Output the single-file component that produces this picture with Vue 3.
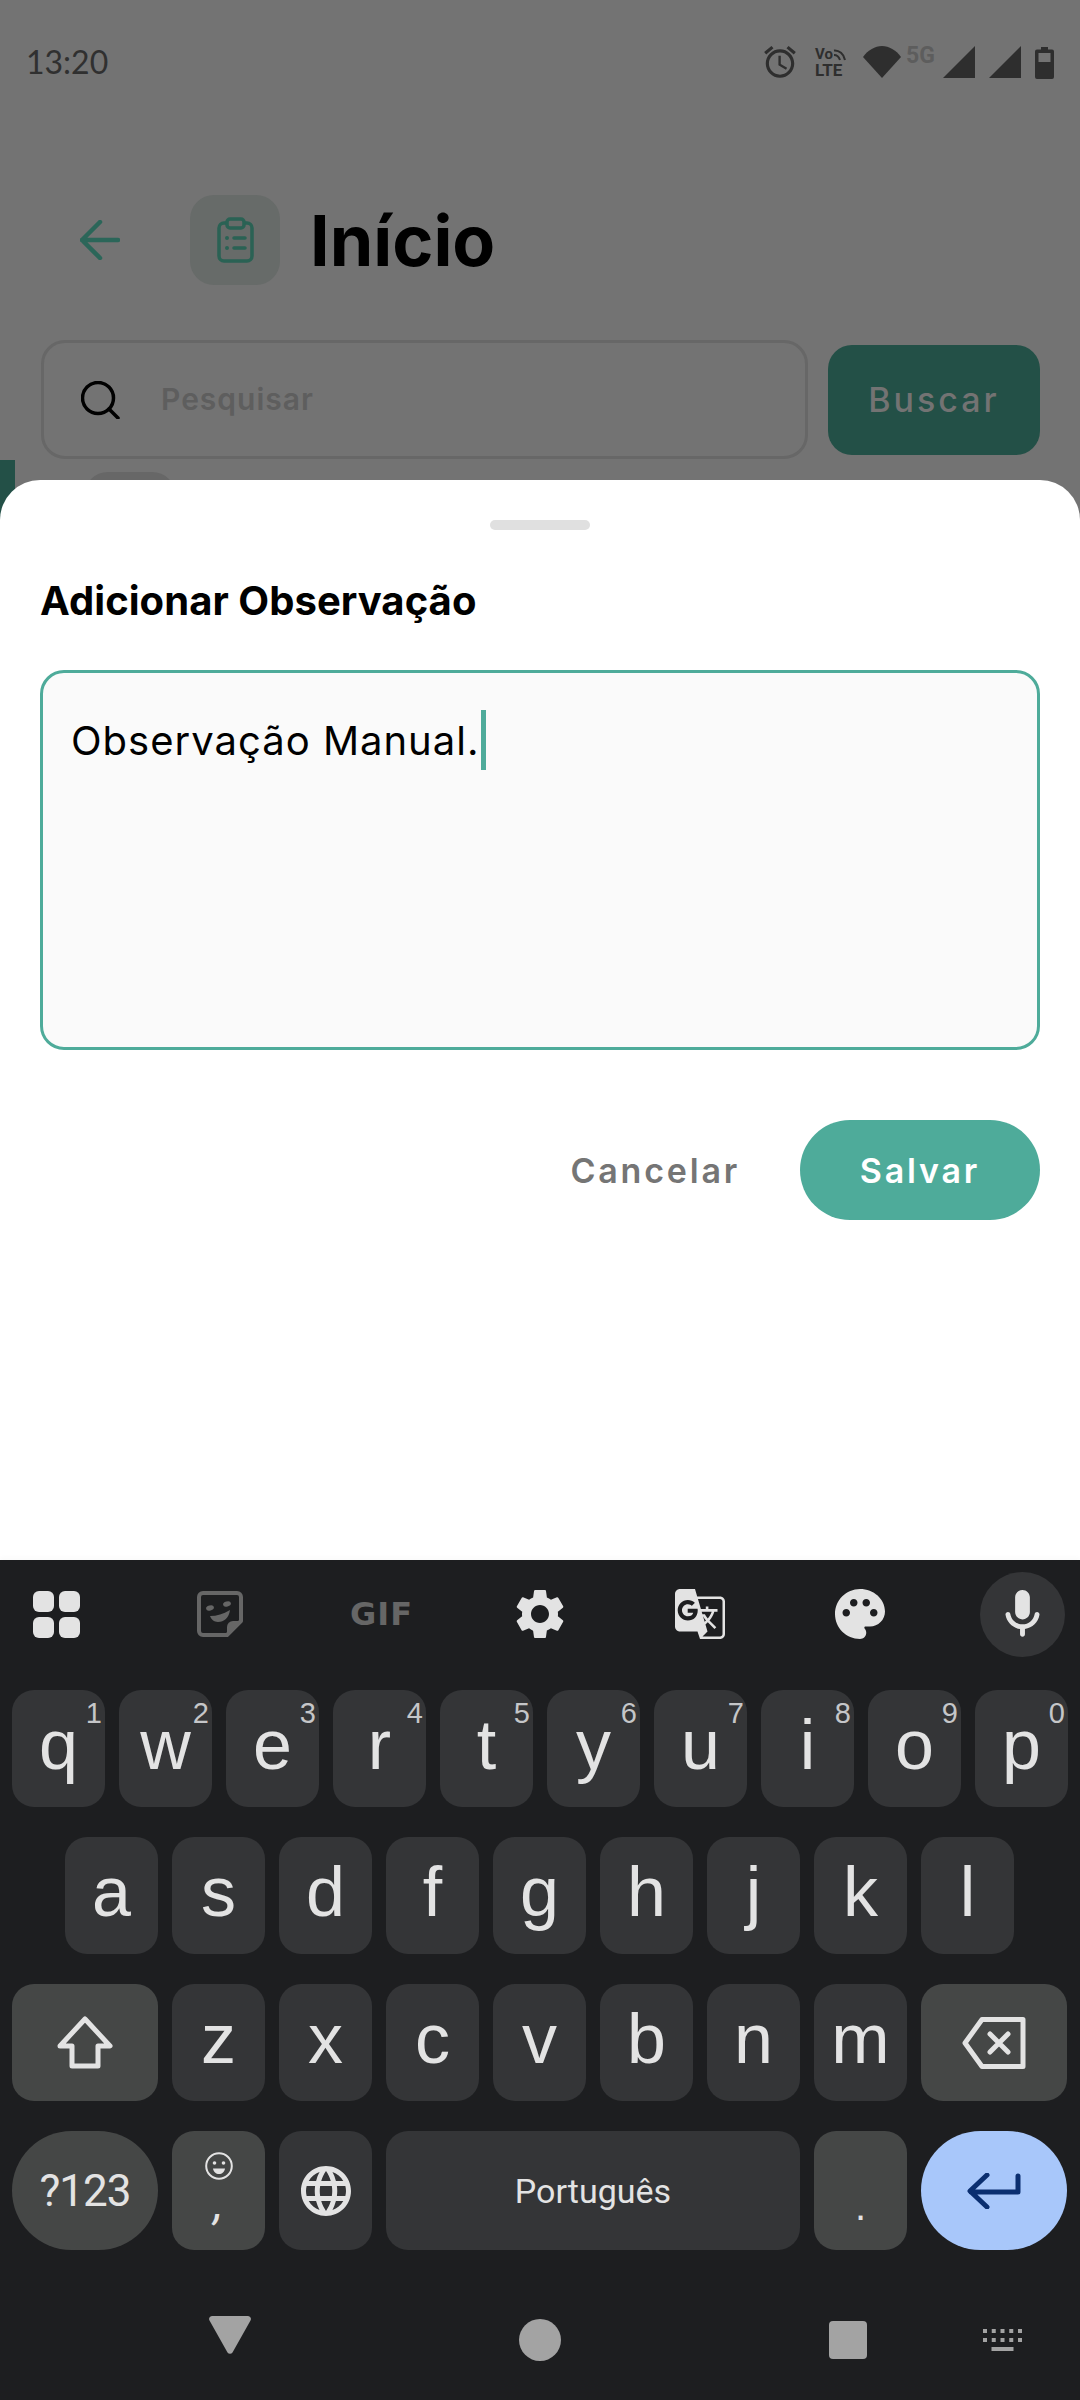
<template>
  <div class="screen">
    <div class="behind">
      <div class="status">
        <span class="time">13:20</span>
        <div class="status-icons">
          <svg class="ic-alarm" width="38" height="38" viewBox="0 0 24 24"><path fill="#2e2e2e" d="M22 5.72l-4.6-3.86-1.29 1.53 4.6 3.86L22 5.72zM7.88 3.39L6.6 1.86 2 5.71l1.29 1.53 4.59-3.85zM12.5 8H11v6l4.75 2.85.75-1.23-4-2.37V8zM12 4c-4.97 0-9 4.03-9 9s4.03 9 9 9 9-4.03 9-9-4.03-9-9-9zm0 16c-3.87 0-7-3.13-7-7s3.13-7 7-7 7 3.13 7 7-3.13 7-7 7z"/></svg>
          <div class="volte">
            <div class="vo">Vo<svg width="14" height="14" viewBox="0 0 14 14"><path d="M1 3.5C6 3 11 7 12 13M1 8c3 0 5 2 6 5" fill="none" stroke="#2e2e2e" stroke-width="2"/></svg></div>
            <div class="lte">LTE</div>
          </div>
          <svg class="ic-wifi" width="38" height="32" viewBox="0 0 38 32"><path fill="#2e2e2e" d="M0 11C5 4 12 0 19 0s14 4 19 11L19 32z"/></svg>
          <span class="five-g">5G</span>
          <svg class="ic-sig1" width="32" height="32" viewBox="0 0 32 32"><path fill="#2e2e2e" d="M32 0v32H0z"/></svg>
          <svg class="ic-sig2" width="32" height="32" viewBox="0 0 32 32"><path fill="#2e2e2e" d="M32 0v32H0z"/></svg>
          <svg class="ic-batt" width="19" height="32" viewBox="0 0 19 32"><path fill="#2e2e2e" d="M6 0h7v2.5h4a2 2 0 0 1 2 2V30a2 2 0 0 1-2 2H2a2 2 0 0 1-2-2V4.500a2 2 0 0 1 2-2h4z"/><rect x="3.500" y="6" width="12" height="9" fill="#737373"/></svg>
        </div>
      </div>

      <div class="header">
        <svg class="back" width="40" height="40" viewBox="0 0 40 40"><path d="M38 20H2M20 2L2 20l18 18" fill="none" stroke="#2b6659" stroke-width="4.500" stroke-linecap="round" stroke-linejoin="round"/></svg>
        <div class="head-icon">
          <svg width="37" height="46" viewBox="0 0 37 46">
            <rect x="2" y="6" width="33" height="38" rx="5" fill="none" stroke="#2a6254" stroke-width="3.500"/>
            <rect x="10" y="2" width="17" height="9" rx="3" fill="#676b69" stroke="#2a6254" stroke-width="3.500"/>
            <circle cx="10" cy="21" r="2" fill="#2a6254"/>
            <circle cx="10" cy="31" r="2" fill="#2a6254"/>
            <path d="M17 21h11M17 31h11" stroke="#2a6254" stroke-width="3.500" stroke-linecap="round"/>
          </svg>
        </div>
        <h1 class="page-title">Início</h1>
      </div>

      <div class="search-row">
        <div class="search-box">
          <svg width="39" height="38" viewBox="0 0 39 38"><circle cx="17" cy="17" r="15.500" fill="none" stroke="#000" stroke-width="3.500"/><path d="M28 28l9 9" stroke="#000" stroke-width="3.500" stroke-linecap="round"/></svg>
          <span class="placeholder">Pesquisar</span>
        </div>
        <div class="search-btn">Buscar</div>
      </div>

      <div class="peek">
        <div class="peek-bar"></div>
        <div class="peek-chip"></div>
      </div>
    </div>

    <div class="sheet">
      <div class="handle"></div>
      <h2 class="sheet-title">Adicionar Observação</h2>
      <div class="note">Observação Manual.<span class="caret"></span></div>
      <div class="actions">
        <span class="cancel">Cancelar</span>
        <span class="save">Salvar</span>
      </div>
    </div>

    <div class="keyboard">
      <div class="toolbar">
        <svg class="tb-grid" width="47" height="47" viewBox="0 0 47 47"><g fill="#e3e3e3"><rect width="21" height="21" rx="6"/><rect x="26" width="21" height="21" rx="6"/><rect y="26" width="21" height="21" rx="6"/><rect x="26" y="26" width="21" height="21" rx="6"/></g></svg>
        <svg class="tb-sticker" width="46" height="46" viewBox="0 0 46 46">
          <path d="M6 2h34a4 4 0 0 1 4 4v24L30 44H6a4 4 0 0 1-4-4V6a4 4 0 0 1 4-4z" fill="none" stroke="#666" stroke-width="4" stroke-linejoin="round"/>
          <path d="M44 30h-8a6 6 0 0 0-6 6v8z" fill="#666"/>
          <ellipse cx="13" cy="17" rx="4" ry="2.500" fill="#666" transform="rotate(-15 13 17)"/>
          <ellipse cx="30" cy="13" rx="4" ry="2.500" fill="#666" transform="rotate(-15 30 13)"/>
          <path d="M13 25c7 0 13-2 20-6-1 8-6 12-12 12-4 0-7-3-8-6z" fill="#666"/>
        </svg>
        <span class="tb-gif">GIF</span>
        <svg class="tb-gear" width="50" height="50" viewBox="2.500 2 19 20"><path fill="#e3e3e3" d="M19.140 12.940c.04-.3.06-.61.06-.94 0-.32-.02-.64-.07-.94l2.030-1.580c.18-.14.23-.41.12-.61l-1.920-3.320c-.12-.22-.37-.29-.59-.22l-2.390.96c-.5-.38-1.030-.7-1.620-.94l-.36-2.540c-.04-.24-.24-.41-.48-.41h-3.840c-.24 0-.43.17-.47.41l-.36 2.540c-.59.24-1.130.57-1.620.94l-2.390-.96c-.22-.08-.47 0-.59.22L2.740 8.870c-.12.21-.08.47.12.61l2.030 1.580c-.05.3-.09.63-.09.94s.02.64.07.94l-2.030 1.580c-.18.14-.23.41-.12.61l1.920 3.320c.12.22.37.29.59.22l2.390-.96c.5.38 1.030.7 1.620.94l.36 2.540c.05.24.24.41.48.41h3.840c.24 0 .44-.17.47-.41l.36-2.540c.59-.24 1.130-.56 1.620-.94l2.390.96c.22.08.47 0 .59-.22l1.920-3.320c.12-.22.07-.47-.12-.61l-2.010-1.580zM12 15.600c-1.980 0-3.600-1.620-3.600-3.600s1.620-3.600 3.600-3.600 3.600 1.620 3.600 3.600-1.620 3.600-3.600 3.600z"/></svg>
        <svg class="tb-translate" width="50" height="50" viewBox="2 2 20 20"><path fill="#e3e3e3" d="M20 5h-9.120L10 2H4c-1.100 0-2 .9-2 2v13c0 1.100.9 2 2 2h7l1 3h8c1.100 0 2-.9 2-2V7c0-1.100-.9-2-2-2zM7.170 14.590c-2.250 0-4.090-1.830-4.090-4.090s1.830-4.090 4.090-4.090c1.040 0 1.990.37 2.740 1.070l.07.06-1.230 1.180-.06-.05c-.29-.27-.78-.59-1.520-.59-1.310 0-2.380 1.090-2.380 2.420s1.070 2.420 2.380 2.420c1.370 0 1.960-.87 2.120-1.460H7.080V9.910h3.950l.01.07c.04.21.05.4.05.61 0 2.350-1.610 4-3.920 4zm6.030-1.710c.33.6.74 1.180 1.190 1.700l-.54.53-.65-2.230zm.77-.76h-.99l-.31-1.040h3.990s-.34 1.310-1.560 2.740c-.52-.62-.89-1.230-1.130-1.700zM21 20c0 .55-.45 1-1 1h-7l2-2-.81-2.770.92-.92L17.790 18l.73-.73-2.710-2.680c.9-1.030 1.600-2.250 1.920-3.510H19v-1.040h-3.640V9h-1.040v1.040h-1.960L11.180 6H20c.55 0 1 .45 1 1v13z"/></svg>
        <svg class="tb-palette" width="50" height="50" viewBox="2 2 20 20"><path fill="#e3e3e3" d="M12 2C6.490 2 2 6.490 2 12s4.490 10 10 10c1.380 0 2.500-1.120 2.500-2.500 0-.61-.23-1.200-.64-1.670-.08-.1-.13-.21-.13-.33 0-.28.22-.5.5-.5H16c3.310 0 6-2.690 6-6 0-4.960-4.490-9-10-9zm5.500 11c-.83 0-1.500-.67-1.500-1.500s.67-1.500 1.500-1.500 1.500.67 1.500 1.500-.67 1.500-1.500 1.500zm-3-4c-.83 0-1.500-.67-1.500-1.500S13.670 6 14.500 6s1.500.67 1.500 1.500S15.330 9 14.500 9zM5 11.500c0-.83.67-1.500 1.500-1.500s1.500.67 1.500 1.500S7.330 13 6.500 13 5 12.330 5 11.500zm6-4c0 .83-.67 1.500-1.500 1.500S8 8.330 8 7.500 8.670 6 9.500 6s1.500.67 1.500 1.500z"/></svg>
        <div class="tb-mic">
          <svg width="59" height="59" viewBox="0 0 24 24"><path fill="#e3e3e3" d="M12 14c1.660 0 3-1.340 3-3V5c0-1.660-1.340-3-3-3S9 3.340 9 5v6c0 1.660 1.340 3 3 3zm5.910-3c-.49 0-.9.36-.98.85C16.520 14.200 14.470 16 12 16s-4.520-1.800-4.930-4.150c-.08-.49-.49-.85-.98-.85-.61 0-1.090.54-1 1.140.49 3 2.890 5.350 5.910 5.780V20c0 .55.45 1 1 1s1-.45 1-1v-2.080c3.020-.43 5.420-2.780 5.910-5.780.1-.6-.39-1.140-1-1.140z"/></svg>
        </div>
      </div>

      <div class="row">
        <div v-for="k in topRow" :key="k.l" class="key">{{ k.l }}<span class="sup">{{ k.n }}</span></div>
      </div>
      <div class="row row-mid">
        <div v-for="l in midRow" :key="l" class="key">{{ l }}</div>
      </div>
      <div class="row">
        <div class="key fn wide">
          <svg width="56" height="53" viewBox="0 0 56 53"><path d="M28 3l25 27H41v20H15V30H3z" fill="none" stroke="#e3e3e3" stroke-width="5" stroke-linejoin="round"/></svg>
        </div>
        <div v-for="l in lowRow" :key="l" class="key">{{ l }}</div>
        <div class="key fn wide">
          <svg width="64" height="52" viewBox="0 0 64 52"><path d="M20 2.500h41V49.500H20L3 26z" fill="none" stroke="#e3e3e3" stroke-width="5" stroke-linejoin="round"/><path d="M28 17l18 18M46 17L28 35" stroke="#e3e3e3" stroke-width="5" stroke-linecap="round"/></svg>
        </div>
      </div>
      <div class="row row-last">
        <div class="key fn wide pill sym">?123</div>
        <div class="key fn comma">
          <svg width="28" height="28" viewBox="0 0 28 28"><circle cx="14" cy="14" r="12.800" fill="none" stroke="#e3e3e3" stroke-width="2"/><circle cx="9.500" cy="11" r="1.800" fill="#e3e3e3"/><circle cx="18.500" cy="11" r="1.800" fill="#e3e3e3"/><path d="M8 16.500h12c-.5 3.500-3 5.500-6 5.500s-5.500-2-6-5.500z" fill="#e3e3e3"/></svg>
          <span class="comma-mark">,</span>
        </div>
        <div class="key">
          <svg width="60" height="60" viewBox="0 0 24 24"><path fill="#e3e3e3" d="M11.990 2C6.470 2 2 6.480 2 12s4.470 10 9.990 10C17.520 22 22 17.520 22 12S17.520 2 11.990 2zm6.930 6h-2.950c-.32-1.250-.78-2.450-1.380-3.560 1.840.63 3.370 1.910 4.330 3.560zM12 4.040c.83 1.200 1.480 2.530 1.910 3.960h-3.820c.43-1.430 1.080-2.760 1.910-3.960zM4.260 14C4.100 13.360 4 12.690 4 12s.1-1.360.26-2h3.380c-.08.66-.14 1.320-.14 2 0 .68.06 1.340.14 2H4.260zm.82 2h2.950c.32 1.250.78 2.450 1.380 3.560-1.840-.63-3.370-1.900-4.330-3.560zm2.950-8H5.080c.96-1.660 2.490-2.930 4.330-3.560C8.810 5.550 8.350 6.750 8.030 8zM12 19.960c-.83-1.200-1.480-2.530-1.910-3.960h3.820c-.43 1.430-1.080 2.760-1.910 3.960zM14.340 14H9.660c-.09-.66-.16-1.320-.16-2 0-.68.07-1.350.16-2h4.680c.09.65.16 1.320.16 2 0 .68-.07 1.340-.16 2zm.25 5.560c.6-1.110 1.060-2.310 1.380-3.560h2.950c-.96 1.650-2.490 2.930-4.330 3.560zM16.360 14c.08-.66.14-1.320.14-2 0-.68-.06-1.340-.14-2h3.380c.16.64.26 1.310.26 2s-.1 1.360-.26 2h-3.380z"/></svg>
        </div>
        <div class="key space">Português</div>
        <div class="key fn period">.</div>
        <div class="key wide pill enter">
          <svg width="54" height="36" viewBox="0 0 54 36"><path d="M51 3v16H4M20 2L3 18l17 16" fill="none" stroke="#0b2f70" stroke-width="5" stroke-linecap="round" stroke-linejoin="round"/></svg>
        </div>
      </div>

      <div class="nav">
        <svg class="nav-back" width="42" height="38" viewBox="0 0 42 38"><path d="M3 0h36a3 3 0 0 1 2.500 4.500L23.500 36.500a3 3 0 0 1-5 0L.5 4.500A3 3 0 0 1 3 0z" fill="#a3a3a3"/></svg>
        <div class="nav-home"></div>
        <div class="nav-recent"></div>
        <svg class="nav-kb" width="39" height="22" viewBox="0 0 39 22"><g fill="#a3a3a3"><rect v-for="d in kbDots" :key="d.x + '-' + d.y" :x="d.x" :y="d.y" width="4" height="4"/><rect x="8.500" y="18" width="22" height="4"/></g></svg>
      </div>
    </div>
  </div>
</template>

<script setup>
const topRow = [
  { l: 'q', n: '1' }, { l: 'w', n: '2' }, { l: 'e', n: '3' }, { l: 'r', n: '4' }, { l: 't', n: '5' },
  { l: 'y', n: '6' }, { l: 'u', n: '7' }, { l: 'i', n: '8' }, { l: 'o', n: '9' }, { l: 'p', n: '0' },
]
const midRow = ['a', 's', 'd', 'f', 'g', 'h', 'j', 'k', 'l']
const lowRow = ['z', 'x', 'c', 'v', 'b', 'n', 'm']

const kbDots = []
for (const y of [0, 9]) {
  for (let i = 0; i < 5; i++) kbDots.push({ x: i * 8.75, y })
}
</script>

<style>
html, body {
  margin: 0;
  background: #737373;
}
</style>

<style scoped>
.screen {
  width: 1080px;
  height: 2400px;
  display: flex;
  flex-direction: column;
  background: #737373;
  overflow: hidden;
  font-family: Inter, "Liberation Sans", sans-serif;
}

.behind {
  height: 520px;
  margin-bottom: -40px;
  flex: none;
  overflow: hidden;
}

.status {
  height: 124px;
  display: flex;
  align-items: flex-start;
  justify-content: space-between;
  box-sizing: border-box;
  padding: 44px 26px 0 26px;
}

.time {
  font-family: Lato, sans-serif;
  font-size: 32px;
  line-height: 36px;
  color: #303030;
}

.status-icons {
  display: flex;
  align-items: flex-start;
}

.ic-alarm { margin-top: -1px; margin-right: 1px; }
.volte { margin-left: 15px; width: 38px; color: #2e2e2e; font-family: Roboto, sans-serif; font-weight: 700; }
.vo { display: flex; align-items: flex-start; font-size: 15px; line-height: 15px; height: 15px; margin-top: 3px; }
.lte { font-size: 17px; line-height: 16px; }
.ic-wifi { margin-left: 10px; margin-top: 2px; }
.five-g { margin-left: 5px; width: 31px; font-family: Roboto, sans-serif; font-weight: 700; font-size: 23px; line-height: 20px; color: #5d5d5d; margin-top: 2px; }
.ic-sig1 { margin-left: 6px; margin-top: 2px; }
.ic-sig2 { margin-left: 14px; margin-top: 2px; }
.ic-batt { margin-left: 14px; margin-top: 3px; }

.header {
  height: 90px;
  margin-top: 71px;
  display: flex;
  align-items: center;
  padding-left: 80px;
}

.head-icon {
  width: 90px;
  height: 90px;
  margin-left: 70px;
  border-radius: 24px;
  background: #676b69;
  display: flex;
  align-items: center;
  justify-content: center;
}

.page-title {
  margin: 0 0 0 30px;
  font-size: 70px;
  font-weight: 700;
  color: #000;
}

.search-row {
  margin-top: 55px;
  padding: 0 40px 0 41px;
  display: flex;
  align-items: center;
  justify-content: space-between;
}

.search-box {
  width: 767px;
  height: 119px;
  box-sizing: border-box;
  border: 3px solid #676767;
  border-radius: 24px;
  display: flex;
  align-items: center;
  padding-left: 37px;
}

.placeholder {
  margin: -2px 0 0 41px;
  font-size: 30px;
  font-weight: 600;
  letter-spacing: 1px;
  color: #5e5e5e;
}

.search-btn {
  width: 212px;
  height: 110px;
  border-radius: 24px;
  background: #235047;
  color: #737373;
  font-size: 34px;
  font-weight: 500;
  letter-spacing: 3px;
  display: flex;
  align-items: center;
  justify-content: center;
}

.peek {
  position: relative;
  height: 60px;
}

.peek-bar {
  position: absolute;
  left: 0;
  top: 1px;
  width: 15px;
  height: 60px;
  background: #235047;
}

.peek-chip {
  position: absolute;
  left: 84px;
  top: 13px;
  width: 92px;
  height: 60px;
  border-radius: 24px;
  background: #676767;
}

.sheet {
  position: relative;
  height: 1080px;
  flex: none;
  box-sizing: border-box;
  background: #fff;
  border-radius: 40px 40px 0 0;
  padding: 40px 40px 0 40px;
}

.handle {
  width: 100px;
  height: 10px;
  margin: 0 auto;
  border-radius: 5px;
  background: #e0e0e0;
}

.sheet-title {
  margin: 47px 0 0 0;
  font-size: 40px;
  line-height: 48px;
  letter-spacing: 0.05px;
  font-weight: 700;
  color: #000;
}

.note {
  margin-top: 45px;
  height: 380px;
  box-sizing: border-box;
  border: 3px solid #4eab9a;
  border-radius: 24px;
  background: #fafafa;
  padding: 37px 28px;
  font-size: 40px;
  line-height: 54px;
  letter-spacing: 1px;
  color: #000;
}

.caret {
  display: inline-block;
  width: 5px;
  height: 60px;
  margin-left: 2px;
  background: #4eab9a;
  vertical-align: -15px;
}

.actions {
  margin-top: 70px;
  display: flex;
  align-items: center;
  justify-content: flex-end;
}

.cancel {
  margin-right: 60px;
  font-size: 34px;
  font-weight: 600;
  letter-spacing: 2.8px;
  color: #757575;
}

.save {
  width: 240px;
  height: 100px;
  border-radius: 50px;
  background: #4eab9a;
  color: #fff;
  font-size: 34px;
  font-weight: 600;
  letter-spacing: 2.8px;
  display: flex;
  align-items: center;
  justify-content: center;
}

.keyboard {
  flex: 1;
  background: #1d1e20;
  box-shadow: 0 -3px 4px rgba(0, 0, 0, 0.02);
  position: relative;
}

.toolbar {
  height: 130px;
  box-sizing: border-box;
  padding: 0 0 22px 33px;
  display: flex;
  align-items: center;
}

.tb-sticker { margin-left: 117px; }
.tb-gif {
  margin-left: 107px;
  width: 60px;
  font-family: "DejaVu Sans", sans-serif;
  font-weight: 700;
  font-size: 32px;
  letter-spacing: 1px;
  color: #666;
}
.tb-gear { margin-left: 105px; }
.tb-translate { margin-left: 110px; }
.tb-palette { margin-left: 110px; }
.tb-mic {
  margin-left: 95px;
  width: 85px;
  height: 85px;
  border-radius: 50%;
  background: #343537;
  display: flex;
  align-items: center;
  justify-content: center;
}

.row {
  display: flex;
  gap: 14px;
  padding: 0 12px;
  height: 117px;
  margin-bottom: 30px;
}

.row-mid { padding-left: 65px; }
.row-last { height: 119px; margin-bottom: 0; }

.key {
  position: relative;
  flex: 0 0 93px;
  box-sizing: border-box;
  border-radius: 22px;
  background: #343537;
  color: #e3e3e3;
  font-family: "Liberation Sans", sans-serif;
  font-size: 70px;
  line-height: 1;
  display: flex;
  align-items: center;
  justify-content: center;
  padding-bottom: 8px;
}

.key svg { flex: none; }
.fn { background: #454746; }
.wide { flex: 0 0 146px; padding-bottom: 0; }
.row-last .key { padding-bottom: 0; }
.pill { border-radius: 60px; }

.sup {
  position: absolute;
  top: 6px;
  right: 3px;
  font-size: 29px;
  line-height: 34px;
  color: #c5c6c8;
}

.sym {
  font-family: Roboto, sans-serif;
  font-size: 44px;
  letter-spacing: -1px;
}

.comma {
  flex-direction: column;
  justify-content: flex-start;
  padding-top: 21px;
}

.comma-mark {
  font-family: Roboto, sans-serif;
  font-style: italic;
  font-size: 46px;
  line-height: 30px;
  margin-top: 8px;
}

.space {
  flex: 0 0 414px;
  font-family: Roboto, sans-serif;
  font-size: 34px;
}

.period {
  align-items: flex-end;
  font-size: 40px;
  padding-bottom: 24px !important;
}

.enter { background: #a8c7fa; }

.nav {
  margin-top: 69px;
  height: 42px;
  display: flex;
  align-items: center;
  padding-left: 209px;
}

.nav-back { margin-top: -10px; }

.nav-home {
  margin-left: 268px;
  width: 42px;
  height: 42px;
  border-radius: 50%;
  background: #a3a3a3;
}

.nav-recent {
  margin-left: 268px;
  width: 38px;
  height: 38px;
  border-radius: 4px;
  background: #a3a3a3;
}

.nav-kb { margin-left: 116px; }
</style>
